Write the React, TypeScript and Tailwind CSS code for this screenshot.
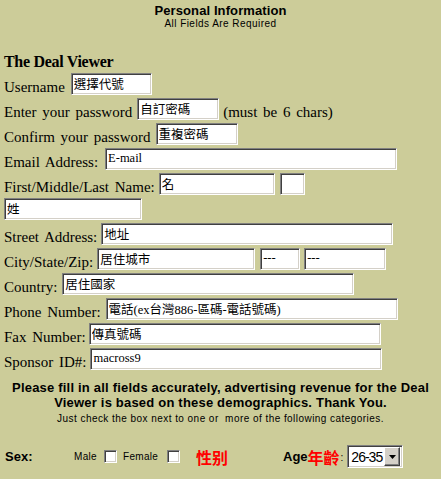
import React from "react";

const inset =
  "h-[22px] shrink-0 bg-white px-[2px] pb-[2px] text-[12.5px] text-black outline-none border border-t-[#808080] border-l-[#808080] border-r-white border-b-white shadow-[inset_1px_1px_0_#404040,inset_-1px_-1px_0_#d4d0c8] font-['Liberation_Serif','Noto_Sans_CJK_TC',serif]";

const Field = ({ value, w, ml = "ml-[4px]" }: { value: string; w: string; ml?: string }) => (
  <input type="text" readOnly defaultValue={value} className={`${inset} ${w} ${ml}`} />
);

const Row = ({ label, children }: { label?: string; children: React.ReactNode }) => (
  <div className="flex h-[22px] items-end">
    {label && <span className="whitespace-nowrap leading-[16px] [word-spacing:2px]">{label}</span>}
    {children}
  </div>
);

const CheckBox = () => (
  <span className="inline-block h-[13px] w-[13px] shrink-0 bg-white border border-t-[#808080] border-l-[#808080] border-r-white border-b-white shadow-[inset_1px_1px_0_#404040,inset_-1px_-1px_0_#d4d0c8]" />
);

const App = () => {
  return (
    <div className="min-h-screen w-full bg-[#cccc99] text-black">
      {/* Header */}
      <div className="pt-[4px] text-center font-['Liberation_Sans',Arial,sans-serif]">
        <div className="text-[13px] font-bold leading-[14px] tracking-[0.1px]">Personal Information</div>
        <div className="text-[10px] leading-[12px] tracking-[0.45px]">All Fields Are Required</div>
      </div>

      <div className="pl-[4px] font-['Liberation_Serif','Times_New_Roman',serif] text-[15px]">
        <h1 className="mt-[23px] text-[16px] font-bold leading-[18px] tracking-[-0.3px]">The Deal Viewer</h1>

        <div className="mt-[2px] flex flex-col gap-[3px]">
          <Row label="Username">
            <Field value="選擇代號" w="w-[81px]" ml="ml-[6px]" />
          </Row>
          <Row label="Enter your password">
            <Field value="自訂密碼" w="w-[82px]" ml="ml-[5px]" />
            <span className="ml-[4px] whitespace-nowrap leading-[16px] [word-spacing:2px]">(must be 6 chars)</span>
          </Row>
          <Row label="Confirm your password">
            <Field value="重複密碼" w="w-[82px]" ml="ml-[5px]" />
          </Row>
          <Row label="Email Address:">
            <Field value="E-mail" w="w-[292px]" ml="ml-[7px]" />
          </Row>
          <Row label="First/Middle/Last Name:">
            <Field value="名" w="w-[116px]" ml="ml-[4px]" />
            <Field value="" w="w-[25px]" ml="ml-[5px]" />
          </Row>
          <Row>
            <Field value="姓" w="w-[138px]" ml="ml-0" />
          </Row>
          <Row label="Street Address:">
            <Field value="地址" w="w-[292px]" />
          </Row>
          <Row label="City/State/Zip:">
            <Field value="居住城市" w="w-[158px]" />
            <Field value="---" w="w-[40px]" ml="ml-[5px]" />
            <Field value="---" w="w-[82px]" />
          </Row>
          <Row label="Country:">
            <Field value="居住國家" w="w-[292px]" ml="ml-[5px]" />
          </Row>
          <Row label="Phone Number:">
            <Field value="電話(ex台灣886-區碼-電話號碼)" w="w-[292px]" ml="ml-[5px]" />
          </Row>
          <Row label="Fax Number:">
            <Field value="傳真號碼" w="w-[292px]" ml="ml-[3px]" />
          </Row>
          <Row label="Sponsor ID#:">
            <Field value="macross9" w="w-[292px]" />
          </Row>
        </div>
      </div>

      {/* Notice */}
      <div className="mt-[10px] text-center font-['Liberation_Sans',Arial,sans-serif]">
        <p className="px-[4px] text-[13px] font-bold leading-[15px] tracking-[0.2px]">
          Please fill in all fields accurately, advertising revenue for the Deal Viewer is based on these
          demographics. Thank You.
        </p>
        <p className="mt-[3px] text-[10px] leading-[12px] tracking-[0.45px]">
          Just check the box next to one or&nbsp; more of the following categories.
        </p>
      </div>

      {/* Sex / Age */}
      <div className="mt-[20px] flex h-[23px] items-center pl-[5px] font-['Liberation_Sans',Arial,sans-serif]">
        <span className="w-[69px] text-[13px] font-bold">Sex:</span>
        <span className="w-[30px] text-[10px] tracking-[0.3px]">Male</span>
        <CheckBox />
        <span className="ml-[6px] w-[44px] text-[10px] tracking-[0.3px]">Female</span>
        <CheckBox />
        <span className="ml-[16px] w-[87px] font-['Noto_Sans_CJK_TC',sans-serif] text-[16px] font-bold leading-[18px] text-[#ff0000]">
          性别
        </span>
        <span className="text-[13px] font-bold">Age</span>
        <span className="font-['Noto_Sans_CJK_TC',sans-serif] text-[16px] font-bold leading-[18px] text-[#ff0000]">年齡</span>
        <span className="ml-[1px] self-end pb-[3px] text-[10px]">:</span>
        <div className="ml-[4px] flex h-[23px] w-[56px] items-center bg-white border border-t-[#808080] border-l-[#808080] border-r-white border-b-white shadow-[inset_1px_1px_0_#404040,inset_-1px_-1px_0_#d4d0c8]">
          <span className="whitespace-nowrap pl-[3px] text-[14px] leading-none tracking-[-1px]">26-35</span>
          <span className="ml-auto mr-[2px] flex h-[19px] w-[16px] shrink-0 items-center justify-center bg-[#d4d0c8] border border-t-white border-l-white border-r-[#404040] border-b-[#404040] shadow-[inset_-1px_-1px_0_#808080]">
            <svg width="7" height="4" viewBox="0 0 7 4">
              <path d="M0 0h7L3.5 4z" fill="#000" />
            </svg>
          </span>
        </div>
      </div>
    </div>
  );
};

export default App;
